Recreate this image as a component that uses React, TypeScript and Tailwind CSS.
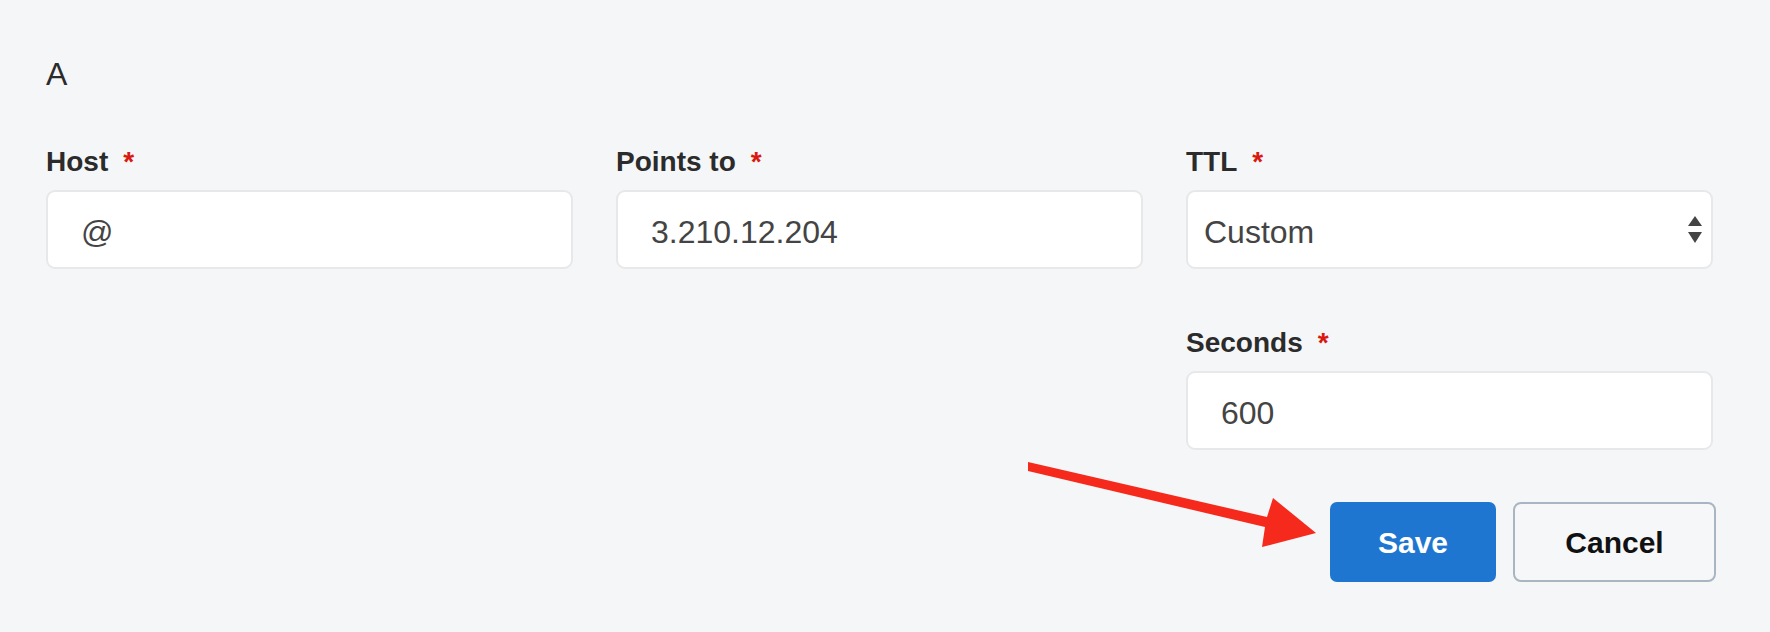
import React from 'react';

const font = { fontFamily: '"Liberation Sans", Arial, sans-serif' };

function Label({ text }: { text: string }) {
  return (
    <div className="flex items-start h-[36px] text-[28px] leading-[36px] font-bold text-[#2b2b2b]">
      <span>{text}</span>
      <span className="ml-[15px] text-[#d9190f] text-[28px] leading-[36px]">*</span>
    </div>
  );
}

function Field({ value, pad = 'pl-[33px]', children }: { value: string; pad?: string; children?: React.ReactNode }) {
  return (
    <div
      className={`mt-[10px] h-[79px] rounded-[9px] border-2 border-[#e6e8e9] bg-white flex items-center ${pad} pr-[9px] text-[32px] text-[#444444]`}
    >
      <span className="flex-1 pt-[4px]">{value}</span>
      {children}
    </div>
  );
}

export default function App() {
  return (
    <div style={font} className="relative w-[1770px] h-[632px] bg-[#f5f6f8] overflow-hidden">
      <div className="pl-[46px] pr-[57px] pt-[54px]">
        {/* record type */}
        <div className="text-[32px] leading-[40px] text-[#2b2b2b]">A</div>

        <div className="mt-[50px] grid grid-cols-3 gap-x-[43px]">
          <div>
            <Label text="Host" />
            <Field value="@" />
          </div>
          <div>
            <Label text="Points to" />
            <Field value="3.210.12.204" />
          </div>
          <div>
            <Label text="TTL" />
            <Field value="Custom" pad="pl-[16px]">
              <svg width="14" height="28" viewBox="0 0 14 28">
                <polygon points="7,0 14,10 0,10" fill="#444444" />
                <polygon points="0,16 14,16 7,27" fill="#444444" />
              </svg>
            </Field>

            <div className="mt-[56px]">
              <Label text="Seconds" />
              <Field value="600" />
            </div>
          </div>
        </div>

        {/* actions */}
        <div className="mt-[52px] -mr-[3px] flex justify-end gap-[17px]">
          <button className="w-[166px] h-[80px] rounded-[7px] bg-[#1f76d1] text-white text-[30px] font-bold">
            Save
          </button>
          <button className="w-[203px] h-[80px] rounded-[8px] border-2 border-[#a9b5c1] bg-[#f6f7f9] text-[#111111] text-[30px] font-bold">
            Cancel
          </button>
        </div>
      </div>

      {/* annotation arrow */}
      <svg className="absolute inset-0 pointer-events-none" width="1770" height="632">
        <polygon
          points="1028,462 1267,517 1273,498 1316,533 1262,547 1265,527 1028,471"
          fill="#f52a1d"
        />
      </svg>
    </div>
  );
}
